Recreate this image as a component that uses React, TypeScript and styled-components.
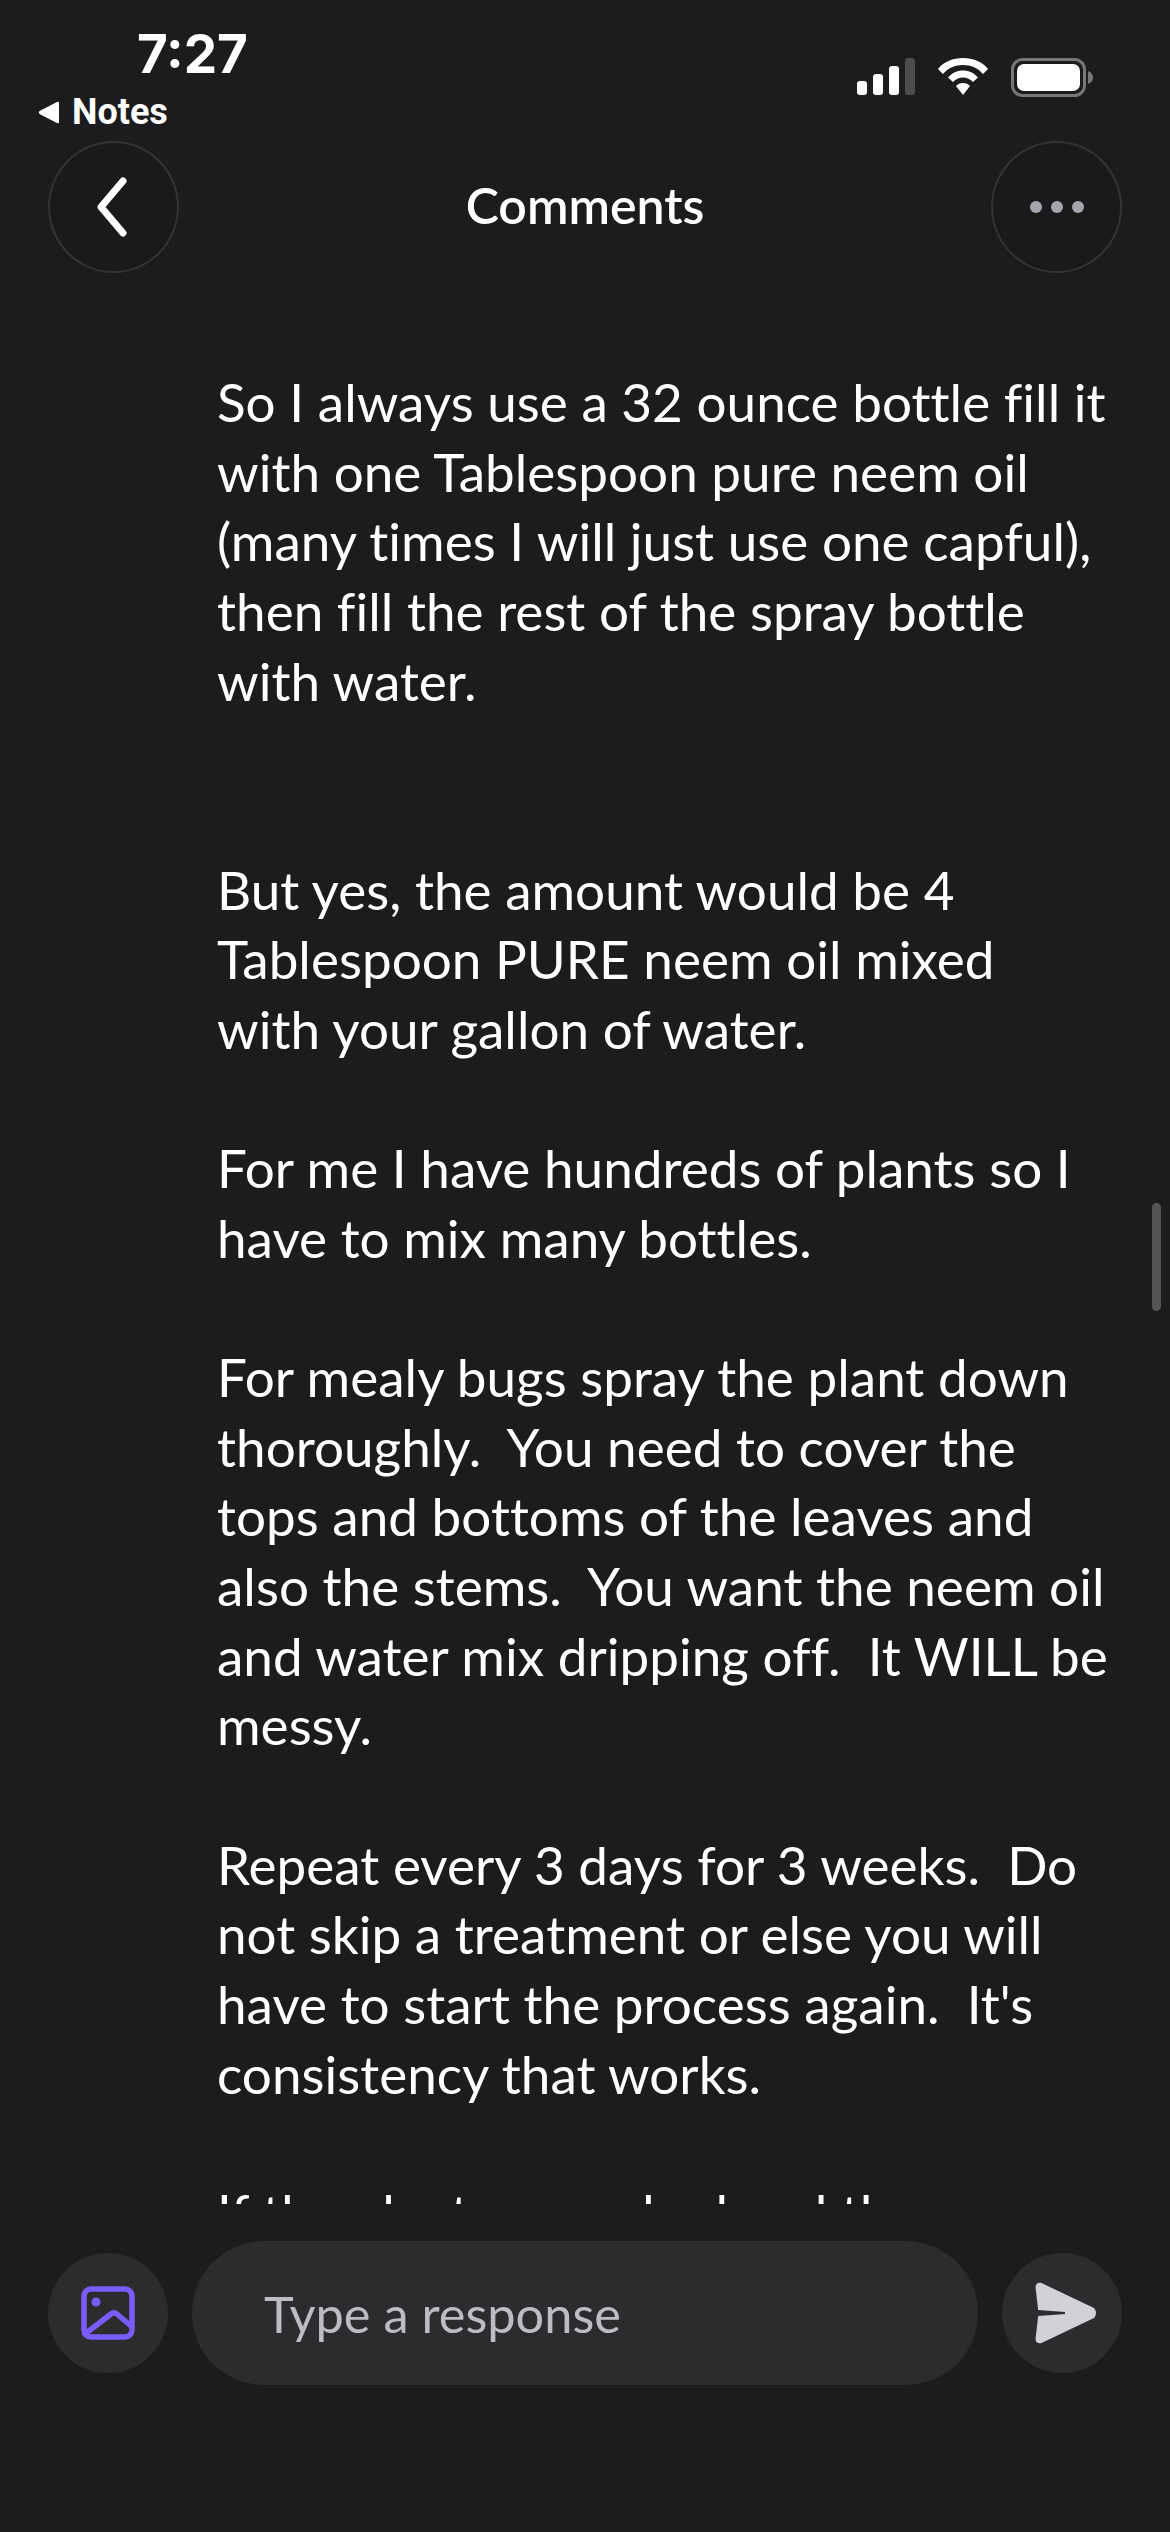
import React from 'react';
import styled, { createGlobalStyle } from 'styled-components';

const paragraphs = [
    {
        blanks: 2,
        lines: [
            'So I always use a 32 ounce bottle fill it',
            'with one Tablespoon pure neem oil',
            '(many times I will just use one capful),',
            'then fill the rest of the spray bottle',
            'with water.',
        ],
    },
    {
        blanks: 1,
        lines: [
            'But yes, the amount would be 4',
            'Tablespoon PURE neem oil mixed',
            'with your gallon of water.',
        ],
    },
    {
        blanks: 1,
        lines: ['For me I have hundreds of plants so I', 'have to mix many bottles.'],
    },
    {
        blanks: 1,
        lines: [
            'For mealy bugs spray the plant down',
            'thoroughly.  You need to cover the',
            'tops and bottoms of the leaves and',
            'also the stems.  You want the neem oil',
            'and water mix dripping off.  It WILL be',
            'messy.',
        ],
    },
    {
        blanks: 1,
        lines: [
            'Repeat every 3 days for 3 weeks.  Do',
            'not skip a treatment or else you will',
            'have to start the process again.  It\'s',
            'consistency that works.',
        ],
    },
    {
        blanks: 0,
        lines: ['If the plant seems bad and the'],
    },
];

const LINE_HEIGHT = 69.65;

const App = () => {
    return (
        <>
            <GlobalStyle />
            <Page>
                <StatusBar>
                    <StatusLeft>
                        <Clock>7:27</Clock>
                        <BackLink>
                            <svg width="22" height="23" viewBox="0 0 22 23">
                                <path d="M21 2 L21 21 Q21 23 19 22 L1.500 13 Q0 11.500 1.500 10 L19 1 Q21 0 21 2 Z" fill="#fff" />
                            </svg>
                            Notes
                        </BackLink>
                    </StatusLeft>
                    <StatusIcons>
                        <svg width="58" height="37" viewBox="0 0 58 37">
                            <rect x="0" y="23" width="10" height="14" rx="3" fill="#fff" />
                            <rect x="16" y="16" width="10" height="21" rx="3" fill="#fff" />
                            <rect x="32" y="8" width="10" height="29" rx="3" fill="#fff" />
                            <rect x="48" y="0" width="10" height="37" rx="3" fill="#4d4d4f" />
                        </svg>
                        <svg width="52" height="37" viewBox="0 0 52 37">
                            <path d="M26 0 C36 0 45 3.500 51 11 L46 16 C41 10 34 7 26 7 C18 7 11 10 6 16 L1 11 C7 3.500 16 0 26 0 Z" fill="#fff" />
                            <path d="M26 12.500 C32 12.500 37 15 41 19.500 L36 24 C33 21 30 19.500 26 19.500 C22 19.500 19 21 16 24 L11 19.500 C15 15 20 12.500 26 12.500 Z" fill="#fff" />
                            <path d="M26 25 C29 25 31 26 33 28 L26 37 L19 28 C21 26 23 25 26 25 Z" fill="#fff" />
                        </svg>
                        <svg width="83" height="39" viewBox="0 0 83 39">
                            <rect x="1.500" y="1.500" width="72" height="36" rx="10" fill="none" stroke="#77777a" strokeWidth="3" />
                            <rect x="6" y="6" width="63" height="27" rx="7" fill="#fff" />
                            <path d="M77 13 Q82 15 82 19.500 Q82 24 77 26 Z" fill="#77777a" />
                        </svg>
                    </StatusIcons>
                </StatusBar>

                <Header>
                    <RoundButton>
                        <BackIcon width="32" height="60" viewBox="0 0 32 60">
                            <path d="M27 4 L5 30 L27 56" fill="none" stroke="#fff" strokeWidth="7" strokeLinecap="round" strokeLinejoin="round" />
                        </BackIcon>
                    </RoundButton>
                    <Title>Comments</Title>
                    <RoundButton>
                        <Dots>
                            <Dot />
                            <Dot />
                            <Dot />
                        </Dots>
                    </RoundButton>
                </Header>

                <Thread>
                    {paragraphs.map((item, index) => (
                        <Paragraph key={index} $blanks={item.blanks}>
                            {item.lines.map((line, lineIndex) => (
                                <Line key={lineIndex}>{line}</Line>
                            ))}
                        </Paragraph>
                    ))}
                    <ScrollThumb />
                </Thread>

                <Composer>
                    <IconButton>
                        <svg width="54" height="54" viewBox="0 0 54 54">
                            <rect x="3" y="3" width="48" height="48" rx="7" fill="none" stroke="#7a5cfa" strokeWidth="5.500" />
                            <circle cx="15" cy="16" r="4.500" fill="#7a5cfa" />
                            <path d="M4 48 L30 28 Q33 25.500 36 28 L50 40" fill="none" stroke="#7a5cfa" strokeWidth="5.500" strokeLinecap="round" strokeLinejoin="round" />
                        </svg>
                    </IconButton>
                    <Field>Type a response</Field>
                    <IconButton>
                        <SendIcon width="62" height="62" viewBox="0 0 62 62">
                            <path d="M6 0.800 L59 26 Q63 31 59 36 L6 61.200 Q1 62 0.500 57 L3.500 31 L0.500 5 Q1 0 6 0.800 Z" fill="#d1d1d6" />
                            <path d="M3 28 L30 30 L30 32 L3 34 Z" fill="#2c2c2e" />
                        </SendIcon>
                    </IconButton>
                </Composer>
            </Page>
        </>
    );
};

const GlobalStyle = createGlobalStyle`
    html, body {
        margin: 0;
        padding: 0;
        background: #1c1c1e;
    }
`

const Page = styled.div`
    display: flex;
    flex-direction: column;
    width: 1170px;
    height: 2532px;
    overflow: hidden;
    background: #1c1c1e;
    color: #fff;
    font-family: Lato, "Noto Sans", sans-serif;
`

const StatusBar = styled.div`
    display: flex;
    justify-content: space-between;
    height: 141px;
    flex-shrink: 0;
`

const StatusLeft = styled.div`
    display: flex;
    flex-direction: column;
    padding: 24px 0 0 38px;
`

const Clock = styled.div`
    font-family: Inter, sans-serif;
    font-size: 53px;
    font-weight: 700;
    line-height: 60px;
    margin-left: 99px;
`

const BackLink = styled.div`
    display: flex;
    align-items: center;
    gap: 12px;
    margin-top: 10px;
    font-family: Roboto, sans-serif;
    font-size: 36px;
    font-weight: 700;
    line-height: 36px;
`

const StatusIcons = styled.div`
    display: flex;
    align-items: flex-start;
    gap: 22px;
    padding: 58px 76px 0 0;
`

const Header = styled.div`
    display: flex;
    align-items: center;
    justify-content: space-between;
    height: 132px;
    padding: 0 48px;
    flex-shrink: 0;
`

const RoundButton = styled.div`
    display: flex;
    align-items: center;
    justify-content: center;
    box-sizing: border-box;
    width: 131px;
    height: 132px;
    border: 2px solid #333335;
    border-radius: 50%;
    background: #1a1a1c;
`

const BackIcon = styled.svg`
    margin-right: 3px;
`

const Title = styled.h1`
    margin: 0 0 5px;
    font-size: 50px;
    font-weight: 600;
    line-height: 60px;
`

const Dots = styled.div`
    display: flex;
    gap: 9px;
`

const Dot = styled.span`
    display: block;
    width: 12px;
    height: 12px;
    border-radius: 50%;
    background: #a5a5ad;
`

const Thread = styled.div`
    position: relative;
    flex: 1;
    min-height: 0;
    overflow: hidden;
    padding: 94px 0 0 217px;
`

const Paragraph = styled.div<{ $blanks: number }>`
    margin-bottom: ${props => props.$blanks * LINE_HEIGHT}px;
`

const Line = styled.div`
    font-size: 53px;
    line-height: ${LINE_HEIGHT}px;
    letter-spacing: 0.03px;
    white-space: pre;
    font-variant-ligatures: none;
`

const ScrollThumb = styled.div`
    position: absolute;
    top: 930px;
    right: 9px;
    width: 9px;
    height: 108px;
    border-radius: 5px;
    background: #555557;
`

const Composer = styled.div`
    display: flex;
    align-items: center;
    gap: 24px;
    height: 144px;
    margin: 37px 0 147px;
    padding: 0 48px;
    flex-shrink: 0;
`

const IconButton = styled.div`
    display: flex;
    align-items: center;
    justify-content: center;
    width: 120px;
    height: 120px;
    flex-shrink: 0;
    border-radius: 50%;
    background: #2c2c2e;
`

const SendIcon = styled.svg`
    margin-left: 8px;
`

const Field = styled.div`
    display: flex;
    align-items: center;
    flex: 1;
    height: 100%;
    padding-left: 72px;
    border-radius: 72px;
    background: #2c2c2e;
    color: #bdbcc2;
    font-size: 50.5px;
`

export default App;
